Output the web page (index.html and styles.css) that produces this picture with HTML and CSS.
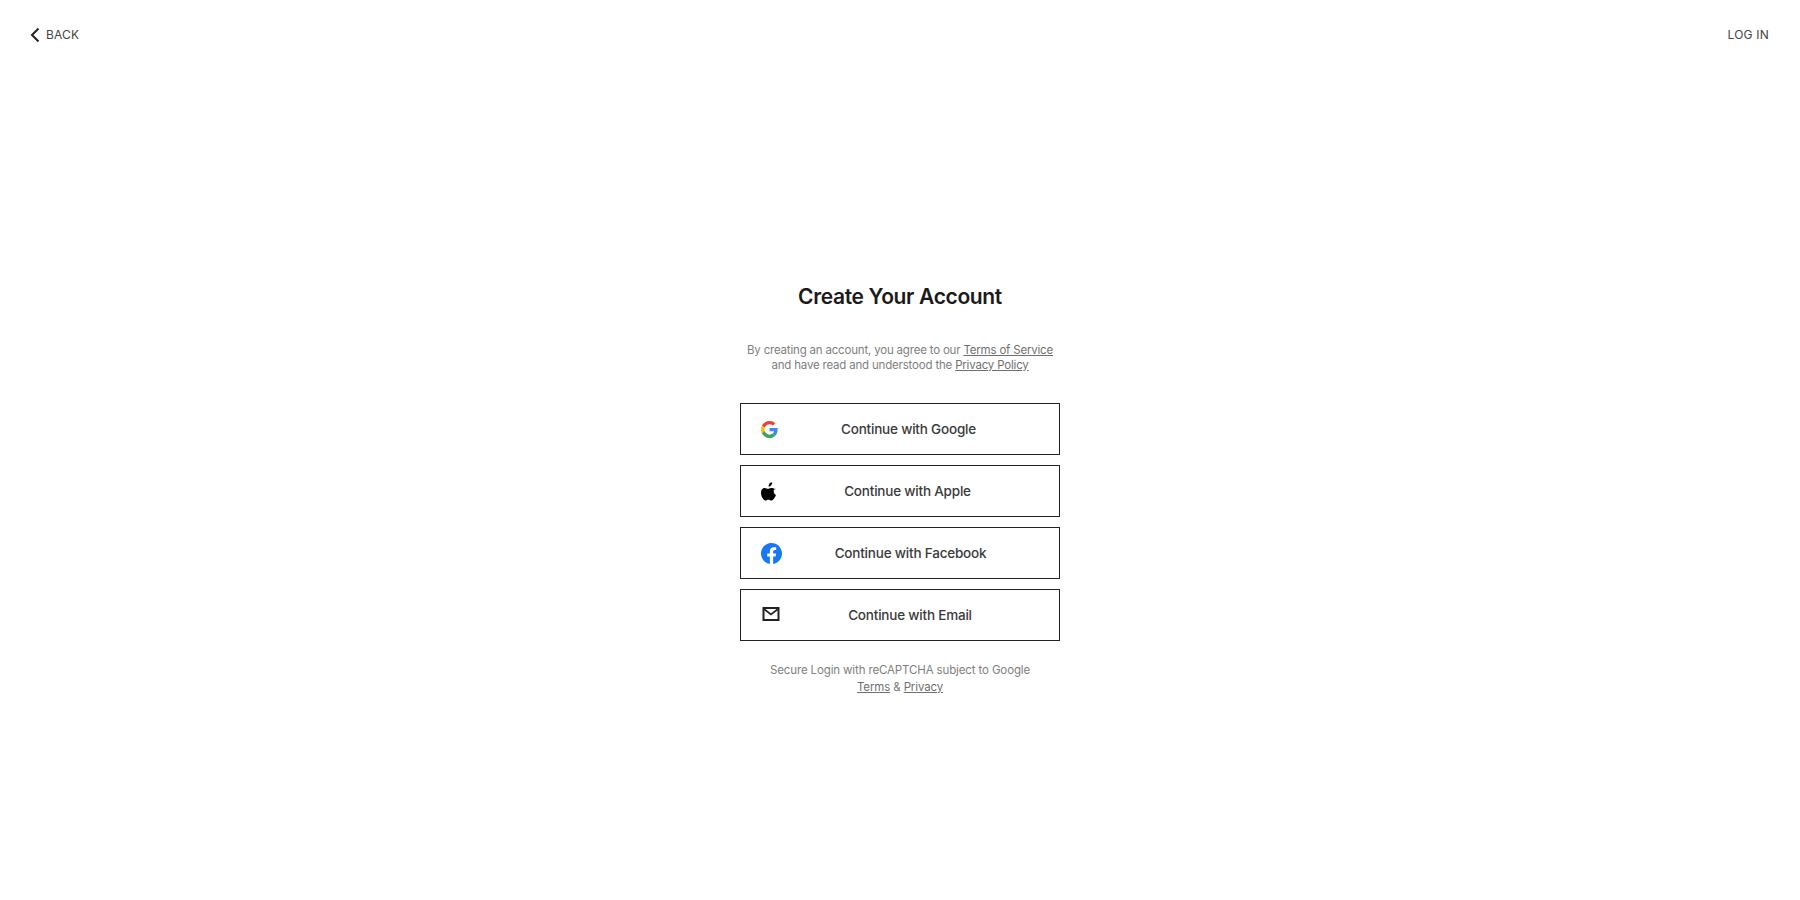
FILE: index.html
```html
<!DOCTYPE html>
<html>
<head>
    <title>Create Your Account</title>
    <link rel="stylesheet" href="styles.css">
</head>
<body>
    <header class="topbar">
        <a class="nav-link" href="#">
            <svg class="back-icon" width="12" height="16" viewBox="0 0 12 16"><path d="M9.500 1.500 L3 8 L9.500 14.500" fill="none" stroke="#222" stroke-width="2"/></svg>
            BACK
        </a>
        <a class="nav-link" href="#">LOG IN</a>
    </header>
    <main class="panel">
        <h1>Create Your Account</h1>
        <p class="terms">By creating an account, you agree to our <a href="#">Terms of Service</a><br>and have read and understood the <a href="#">Privacy Policy</a></p>
        <div class="providers">
            <button type="button" class="provider">
                <svg class="icon-google" width="17" height="17" viewBox="0 0 48 48">
                    <path fill="#EA4335" d="M24 9.500c3.540 0 6.710 1.220 9.210 3.600l6.850-6.850C35.900 2.380 30.470 0 24 0 14.620 0 6.510 5.380 2.560 13.220l7.980 6.190C12.430 13.720 17.740 9.500 24 9.500z"/>
                    <path fill="#4285F4" d="M46.980 24.550c0-1.570-.15-3.090-.38-4.550H24v9.020h12.940c-.58 2.960-2.260 5.480-4.780 7.180l7.730 6c4.510-4.180 7.090-10.360 7.090-17.650z"/>
                    <path fill="#FBBC05" d="M10.530 28.590c-.48-1.450-.76-2.990-.76-4.590s.27-3.140.76-4.590l-7.980-6.190C.92 16.460 0 20.120 0 24c0 3.880.92 7.540 2.560 10.780l7.970-6.190z"/>
                    <path fill="#34A853" d="M24 48c6.480 0 11.930-2.130 15.890-5.810l-7.730-6c-2.150 1.450-4.920 2.300-8.160 2.300-6.260 0-11.570-4.220-13.470-9.910l-7.980 6.190C6.510 42.620 14.620 48 24 48z"/>
                </svg>
                <span class="provider-label">Continue with Google</span>
            </button>
            <button type="button" class="provider">
                <svg class="icon-apple" width="15" height="19" viewBox="0 0 16 20">
                    <path fill="#000" d="M11.900 0.200c.1 1.200-.3 2.200-1 3-.7.900-1.700 1.500-2.800 1.400-.1-1.100.4-2.200 1-2.900C8.800.900 10 .300 11.900.200zM15.300 6.900c-1 .7-1.800 1.700-1.800 3.200 0 1.700 1 2.900 2.400 3.500-.4 1.200-.9 2.300-1.700 3.400-.9 1.300-1.800 2.500-3.100 2.500-1.300 0-1.700-.8-3.200-.8-1.500 0-2 .8-3.200.8-1.300 0-2.200-1.200-3.100-2.500C.400 15 0 13 0 11.100c0-3.200 2-4.900 4.100-4.900 1.300 0 2.400.9 3.200.9.800 0 2-.9 3.500-.9 1.200 0 3.200.4 4.500 1.700z"/>
                </svg>
                <span class="provider-label">Continue with Apple</span>
            </button>
            <button type="button" class="provider">
                <svg class="icon-facebook" width="21" height="21" viewBox="0 0 24 24">
                    <path fill="#1877F2" d="M24 12.070C24 5.400 18.630 0 12 0S0 5.400 0 12.070c0 6.030 4.390 11.020 10.130 11.930v-8.440H7.080v-3.490h3.050V9.410c0-3.020 1.790-4.690 4.530-4.690 1.310 0 2.680.23 2.680.23v2.970h-1.510c-1.490 0-1.960.93-1.960 1.880v2.270h3.330l-.53 3.490h-2.800V24C19.610 23.090 24 18.100 24 12.070z"/>
                </svg>
                <span class="provider-label">Continue with Facebook</span>
            </button>
            <button type="button" class="provider">
                <svg class="icon-email" width="20" height="14" viewBox="0 0 20 14">
                    <rect x="2.500" y="1" width="15" height="12" fill="none" stroke="#222" stroke-width="2"/>
                    <path d="M3 2 L10 7.500 L17 2" fill="none" stroke="#222" stroke-width="1.600"/>
                </svg>
                <span class="provider-label">Continue with Email</span>
            </button>
        </div>
        <p class="recaptcha">Secure Login with reCAPTCHA subject to Google<br><a href="#">Terms</a> &amp; <a href="#">Privacy</a></p>
    </main>
</body>
</html>
```

FILE: styles.css
```css
body {
    font-family: Inter, "Liberation Sans", sans-serif;
    background-color: #fff;
    color: #222;
    margin: 0;
    height: 900px;
    overflow: hidden;
}
a {
    color: inherit;
}
.topbar {
    display: flex;
    justify-content: space-between;
    align-items: center;
    padding: 25px 31px 0 29px;
    height: 18px;
}
.nav-link {
    display: flex;
    align-items: center;
    gap: 5px;
    font-size: 12px;
    letter-spacing: 0.2px;
    color: #444;
    text-decoration: none;
}
.back-icon {
    margin-top: 2px;
}
.panel {
    width: 320px;
    margin: 0 auto;
    padding-top: 239px;
    text-align: center;
}
h1 {
    margin: 0;
    font-size: 21px;
    line-height: 30px;
    font-weight: 600;
    letter-spacing: -0.35px;
    color: #1a1a1a;
}
.terms {
    margin: 31px 0 0;
    font-size: 11.5px;
    line-height: 15px;
    letter-spacing: -0.19px;
    color: #808080;
    white-space: nowrap;
}
.terms a, .recaptcha a {
    color: #707070;
}
.providers {
    display: flex;
    flex-direction: column;
    gap: 10px;
    margin-top: 30px;
}
.provider {
    display: flex;
    align-items: center;
    height: 52px;
    padding: 0 20px;
    background-color: #fff;
    border: 1px solid #222;
    border-radius: 0;
    font-family: inherit;
    color: #3a3a3a;
    cursor: pointer;
}
.provider-label {
    flex: 1;
    font-size: 13.5px;
    font-weight: 500;
    letter-spacing: -0.2px;
    text-align: center;
}
.icon-email {
    margin-top: -2px;
}
.recaptcha {
    margin: 21px 0 0;
    font-size: 11.5px;
    line-height: 17px;
    letter-spacing: -0.13px;
    color: #808080;
}
```
